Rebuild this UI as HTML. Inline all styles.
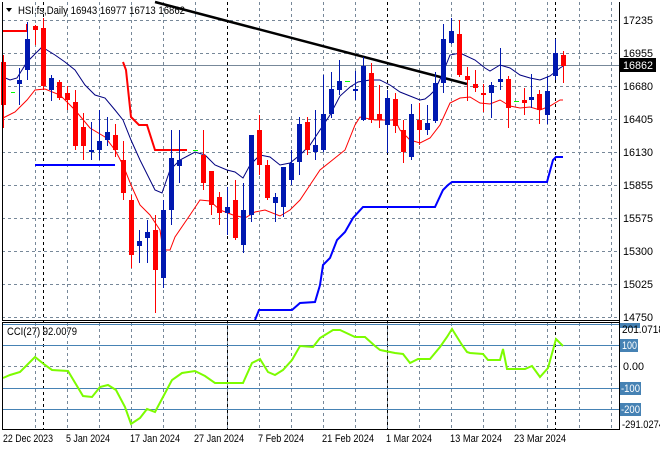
<!DOCTYPE html>
<html><head><meta charset="utf-8"><style>
html,body{margin:0;padding:0;background:#fff;width:660px;height:450px;overflow:hidden}
svg{display:block}
text{font-family:"Liberation Sans",sans-serif;font-size:11px;fill:#000}
</style></head><body>
<svg id="s" width="660" height="450" viewBox="0 0 660 450" xmlns="http://www.w3.org/2000/svg">
<rect width="660" height="450" fill="#fff"/>
<g id="grid" stroke="#778899" stroke-dasharray="3,3" stroke-width="1"></g>
<g stroke="#000" stroke-dasharray="3,3" stroke-width="1">
<line x1="43.5" y1="2" x2="43.5" y2="429"/><line x1="227.5" y1="2" x2="227.5" y2="429"/>
<line x1="387.5" y1="2" x2="387.5" y2="429"/><line x1="555.5" y1="2" x2="555.5" y2="429"/>
</g>
<line x1="2" y1="65.5" x2="619" y2="65.5" stroke="#778899"/>
<g stroke="#4682b4" stroke-width="1">
<line x1="2" y1="324.5" x2="619" y2="324.5"/><line x1="2" y1="345.5" x2="619" y2="345.5"/>
<line x1="2" y1="388.5" x2="619" y2="388.5"/><line x1="2" y1="409.5" x2="619" y2="409.5"/>
</g>
<line x1="2" y1="366.5" x2="619" y2="366.5" stroke="#778899" stroke-dasharray="3,3"/>
<polyline fill="none" stroke="#000" stroke-width="2.5" points="155,2 467,84"/>
<polyline fill="none" stroke="#f00" stroke-width="2" points="2,31 27,31 27,24"/>
<polyline fill="none" stroke="#f00" stroke-width="2" points="123,62 126,70 131,117 139,125 147,125 155,150 187,150"/>
<polyline fill="none" stroke="#00f" stroke-width="2" points="35,165 115,165"/>
<polyline fill="none" stroke="#00f" stroke-width="2" points="255,320 259,310 292,310 300,303 315,302 320,285 323,265 330,258 337,240 345,232 353,218 363,207 435,207 443,190 448,185 452,182 547,182 553,160 556,157 563,157"/>
<polyline fill="none" stroke="#000080" stroke-width="1" points="3,77 10,80 17,78 27,62 42,47 55,55 65,62 75,70 85,85 95,95 105,98 115,110 123,120 131,140 140,160 155,190 162,193 170,170 180,160 195,152 205,155 215,165 227,170 235,172 243,178 250,165 260,155 270,157 280,165 290,163 300,155 310,145 320,130 330,115 340,96 350,87 358,82 370,80 380,80 390,85 400,92 410,96 420,100 425,99 430,95 435,90 442,75 450,55 460,53 475,60 485,68 490,71 500,65 510,68 520,75 530,78 540,80 550,76 560,68 565,65"/>
<polyline fill="none" stroke="#f00" stroke-width="1" points="3,118 15,112 27,100 35,90 45,89 60,95 75,110 90,128 105,137 115,150 123,165 131,185 140,205 150,215 160,230 163,250 170,250 175,237 190,215 200,200 210,201 220,210 233,215 245,218 255,212 265,210 280,216 290,210 300,200 310,185 320,170 330,162 345,150 355,125 360,117 375,120 388,120 395,120 400,130 410,140 420,143 430,138 440,125 450,103 460,98 470,97 480,103 490,104 500,100 510,106 520,108 530,107 540,110 550,106 560,100 563,100"/>
<g id="c"></g>
<g stroke="#0f0" stroke-width="1"><line x1="11" y1="92.5" x2="15" y2="92.5"/><line x1="193" y1="150.5" x2="198" y2="150.5"/><line x1="345" y1="81.5" x2="350" y2="81.5"/><line x1="514" y1="101.5" x2="519" y2="101.5"/></g>
<polyline fill="none" stroke="#7cfc00" stroke-width="2" points="3,378 10,375 20,372 35,357 45,365 52,370 68,371 83,396 92,397 100,387 108,385 116,390 125,407 131,424 140,418 147,409 155,412 163,397 172,380 182,373 195,371 205,376 215,383 225,383 243,383 252,363 260,359 268,372 275,375 283,370 292,360 300,346 313,347 320,338 333,330 340,330 355,337 365,337 375,346 380,350 395,353 403,354 410,363 418,359 430,359 440,347 447,337 452,329 462,345 467,352 470,353 483,354 488,360 500,360 503,349 507,369 525,369 532,366 540,377 548,368 556,339 563,346"/>
<g stroke="#000" fill="none" stroke-width="1">
<line x1="2.5" y1="2" x2="2.5" y2="320"/><line x1="619.5" y1="2" x2="619.5" y2="430"/>
<line x1="2" y1="320.5" x2="620" y2="320.5"/><line x1="2" y1="322.5" x2="620" y2="322.5"/>
<line x1="2.5" y1="322" x2="2.5" y2="430"/><line x1="2" y1="429.5" x2="620" y2="429.5"/>
</g>
<path d="M6 8 L12 8 L9 12 Z" fill="#000"/>
<text x="18" y="14" textLength="167" lengthAdjust="spacingAndGlyphs">HSI.fs,Daily  16943 16977 16713 16862</text>
<text x="7" y="335" textLength="70" lengthAdjust="spacingAndGlyphs">CCI(27) 92.0079</text>
<g>
<text x="623" y="24" textLength="30" lengthAdjust="spacingAndGlyphs">17235</text><text x="623" y="57" textLength="30" lengthAdjust="spacingAndGlyphs">16955</text><text x="623" y="90" textLength="30" lengthAdjust="spacingAndGlyphs">16680</text><text x="623" y="123" textLength="30" lengthAdjust="spacingAndGlyphs">16405</text><text x="623" y="156" textLength="30" lengthAdjust="spacingAndGlyphs">16130</text><text x="623" y="189" textLength="30" lengthAdjust="spacingAndGlyphs">15855</text><text x="623" y="222" textLength="30" lengthAdjust="spacingAndGlyphs">15575</text><text x="623" y="255" textLength="30" lengthAdjust="spacingAndGlyphs">15300</text><text x="623" y="288" textLength="30" lengthAdjust="spacingAndGlyphs">15025</text><text x="623" y="321" textLength="30" lengthAdjust="spacingAndGlyphs">14750</text>
</g>
<rect x="620" y="58" width="36" height="14" fill="#000"/><text x="623" y="69" style="fill:#fff" textLength="30" lengthAdjust="spacingAndGlyphs">16862</text>
<rect x="620" y="323" width="20" height="5" fill="#4682b4"/>
<text x="622" y="333" textLength="42" lengthAdjust="spacingAndGlyphs">201.0718</text>
<rect x="620" y="339" width="18" height="13" fill="#4682b4"/><text x="622" y="349" style="fill:#fff" textLength="15" lengthAdjust="spacingAndGlyphs">100</text>
<text x="623" y="370" textLength="21" lengthAdjust="spacingAndGlyphs">0.00</text>
<rect x="620" y="382" width="21" height="13" fill="#4682b4"/><text x="621" y="392" style="fill:#fff" textLength="19" lengthAdjust="spacingAndGlyphs">-100</text>
<rect x="620" y="403" width="21" height="13" fill="#4682b4"/><text x="621" y="413" style="fill:#fff" textLength="19" lengthAdjust="spacingAndGlyphs">-200</text>
<text x="622" y="428" textLength="42" lengthAdjust="spacingAndGlyphs">-291.0274</text>
<text x="3" y="442" textLength="50" lengthAdjust="spacingAndGlyphs">22 Dec 2023</text><text x="66" y="442" textLength="44" lengthAdjust="spacingAndGlyphs">5 Jan 2024</text><text x="130" y="442" textLength="50" lengthAdjust="spacingAndGlyphs">17 Jan 2024</text><text x="194" y="442" textLength="50" lengthAdjust="spacingAndGlyphs">27 Jan 2024</text><text x="258" y="442" textLength="46" lengthAdjust="spacingAndGlyphs">7 Feb 2024</text><text x="322" y="442" textLength="52" lengthAdjust="spacingAndGlyphs">21 Feb 2024</text><text x="386" y="442" textLength="46" lengthAdjust="spacingAndGlyphs">1 Mar 2024</text><text x="450" y="442" textLength="52" lengthAdjust="spacingAndGlyphs">13 Mar 2024</text><text x="514" y="442" textLength="52" lengthAdjust="spacingAndGlyphs">23 Mar 2024</text>
</svg>
<script>
var ns="http://www.w3.org/2000/svg",g=document.getElementById('grid'),c=document.getElementById('c');
function L(p,x1,y1,x2,y2,st){var l=document.createElementNS(ns,'line');l.setAttribute('x1',x1);l.setAttribute('y1',y1);l.setAttribute('x2',x2);l.setAttribute('y2',y2);if(st)l.setAttribute('stroke',st);p.appendChild(l);}
for(var k=0;k<19;k++){var x=35.5+32*k;if(x==43.5)continue;L(g,x,2,x,320);L(g,x,323,x,429);}
for(var y=20;y<=317;y+=33)L(g,2,y+.5,619,y+.5);
var d=[[3,62,105,55,128,'r'],[19,80,84,68,105,'b'],[27,39,70,22,80,'b'],[35,26,30,25,45,'r'],[43,28,86,18,90,'r'],[51,78,90,75,101,'b'],[59,82,98,80,100,'r'],[67,93,100,86,110,'r'],[75,102,146,90,150,'r'],[83,127,146,113,160,'r'],[91,150,152,122,160,'b'],[99,141,150,110,160,'b'],[107,132,140,117,146,'b'],[115,135,150,124,157,'r'],[123,160,193,141,200,'r'],[131,200,255,195,268,'r'],[139,241,246,230,263,'b'],[147,232,238,220,263,'b'],[155,230,270,215,313,'r'],[163,210,278,200,288,'b'],[171,158,210,130,225,'b'],[179,160,166,130,183,'b'],[203,155,183,130,190,'r'],[211,171,205,171,215,'r'],[219,197,213,192,225,'r'],[227,207,213,187,235,'b'],[235,200,238,180,240,'r'],[243,210,245,183,253,'b'],[251,135,215,135,222,'b'],[259,130,165,115,175,'r'],[267,165,198,160,200,'r'],[275,197,203,193,222,'b'],[283,167,207,175,217,'b'],[291,163,180,150,185,'b'],[299,124,162,117,175,'b'],[307,122,150,117,155,'r'],[315,145,152,110,160,'b'],[323,114,150,75,152,'b'],[331,89,114,72,118,'b'],[339,81,90,60,95,'b'],[355,89,91,71,100,'b'],[363,66,120,57,121,'b'],[371,73,120,63,123,'r'],[379,114,120,85,128,'r'],[387,98,125,90,153,'b'],[395,99,126,93,133,'r'],[403,130,152,120,163,'r'],[411,114,157,104,160,'b'],[419,120,130,103,145,'r'],[427,123,130,105,135,'b'],[435,83,121,72,123,'b'],[443,39,83,24,93,'b'],[451,31,43,18,44,'b'],[459,34,75,20,77,'r'],[467,76,80,67,101,'r'],[475,84,88,70,92,'r'],[483,93,95,84,112,'r'],[491,85,93,82,118,'b'],[500,79,82,48,90,'b'],[508,79,108,76,128,'r'],[524,100,103,88,115,'r'],[531,97,100,74,108,'b'],[539,94,110,90,124,'r'],[547,91,115,76,124,'b'],[555,53,76,39,80,'b'],[563,55,66,51,83,'r']];
d.forEach(function(a){var col=a[5]=='r'?'#f00':'#0018b0';L(c,a[0]+.5,a[3],a[0]+.5,a[4],col);var r=document.createElementNS(ns,'rect');r.setAttribute('x',a[0]-2);r.setAttribute('y',a[1]);r.setAttribute('width',5);r.setAttribute('height',Math.max(2,a[2]-a[1]));r.setAttribute('fill',col);c.appendChild(r);});
</script>
</body></html>
